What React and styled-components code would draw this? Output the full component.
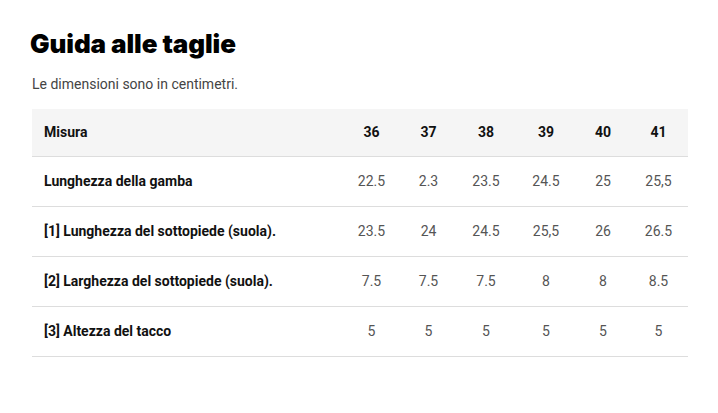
import React from 'react';
import styled, { createGlobalStyle } from 'styled-components';

const GlobalStyle = createGlobalStyle`
  html, body {
    margin: 0;
    padding: 0;
    background: #fff;
    font-family: Roboto, "Liberation Sans", Arial, sans-serif;
  }
`;

const Page = styled.div`
  padding: 28px 30px 0 32px;
`;

const Title = styled.h1`
  font-family: Inter, Roboto, sans-serif;
  font-size: 26px;
  font-weight: 900;
  color: #000;
  margin: 0 0 0 -2px;
  line-height: 32px;
  letter-spacing: -0.1px;
`;

const Subtitle = styled.p`
  font-size: 14px;
  color: #444;
  margin: 14px 0 15px;
  line-height: 20px;
`;

const Table = styled.table`
  width: 656px;
  border-collapse: collapse;
  table-layout: fixed;
  font-size: 14px;
`;

const HeadRow = styled.tr`
  background: #f5f5f5;
  height: 47px;
  border-bottom: 1px solid #ddd;
`;

const Row = styled.tr`
  height: 50px;
  border-bottom: 1px solid #ddd;
`;

const LabelCell = styled.td`
  padding: 0 12px;
  font-weight: 700;
  color: #111;
  text-align: left;
`;

const ValueCell = styled.td`
  padding: 0;
  text-align: center;
  color: ${({ $head }) => ($head ? '#111' : '#555')};
  font-weight: ${({ $head }) => ($head ? 700 : 400)};
`;

const sizes = ['36', '37', '38', '39', '40', '41'];
const widths = [311, 57, 57, 58, 62, 52, 59];

const rows = [
  { label: 'Lunghezza della gamba', values: ['22.5', '2.3', '23.5', '24.5', '25', '25,5'] },
  { label: '[1] Lunghezza del sottopiede (suola).', values: ['23.5', '24', '24.5', '25,5', '26', '26.5'] },
  { label: '[2] Larghezza del sottopiede (suola).', values: ['7.5', '7.5', '7.5', '8', '8', '8.5'] },
  { label: '[3] Altezza del tacco', values: ['5', '5', '5', '5', '5', '5'] },
];

export default function App() {
  return (
    <>
      <GlobalStyle />
      <Page>
        <Title>Guida alle taglie</Title>
        <Subtitle>Le dimensioni sono in centimetri.</Subtitle>
        <Table>
          <colgroup>
            {widths.map((w, i) => (
              <col key={i} style={{ width: w }} />
            ))}
          </colgroup>
          <thead>
            <HeadRow>
              <LabelCell as="th">Misura</LabelCell>
              {sizes.map((s) => (
                <ValueCell as="th" key={s} $head>
                  {s}
                </ValueCell>
              ))}
            </HeadRow>
          </thead>
          <tbody>
            {rows.map((r) => (
              <Row key={r.label}>
                <LabelCell>{r.label}</LabelCell>
                {r.values.map((v, i) => (
                  <ValueCell key={i}>{v}</ValueCell>
                ))}
              </Row>
            ))}
          </tbody>
        </Table>
      </Page>
    </>
  );
}
